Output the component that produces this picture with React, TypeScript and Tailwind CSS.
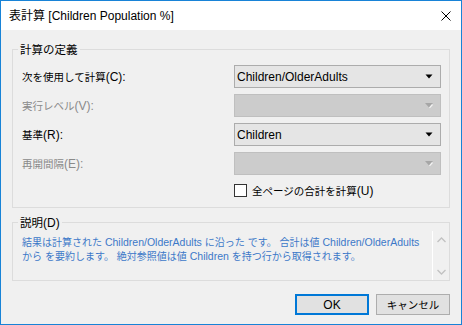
import React from 'react'

const CJK = /([\u3000-\u30ff\u3400-\u9fff\uff00-\uffef]+)/

// Mixed Latin / Japanese text: Japanese runs get the CJK family and their own size
function Txt({ s, j = 'text-[10.5px]' }: { s: string; j?: string }) {
  const parts = s.split(CJK)
  return (
    <>
      {parts.map((p, i) =>
        i % 2 ? (
          <span key={i} className={`font-['Noto_Sans_CJK_JP',sans-serif] ${j}`}>
            {p}
          </span>
        ) : (
          <React.Fragment key={i}>{p}</React.Fragment>
        )
      )}
    </>
  )
}

function Arrow({ disabled }: { disabled?: boolean }) {
  return disabled ? (
    <svg width="9" height="6" viewBox="0 0 9 6" className="mr-[6px]">
      <path d="M0 0h8L4 4.5z" fill="#a6a6a6" />
      <path d="M7.5 1.5L4.5 4.8" stroke="#f4f4f4" strokeWidth="1.2" />
    </svg>
  ) : (
    <svg width="9" height="6" viewBox="0 0 9 6" className="mr-[6px]">
      <path d="M0.5 0.5h7L4 4.5z" fill="#000" />
    </svg>
  )
}

function Select({ value, disabled }: { value?: string; disabled?: boolean }) {
  return (
    <div
      className={
        disabled
          ? 'w-[207px] h-[23px] border border-[#bfbfbf] bg-[#cccccc] flex items-center justify-end'
          : 'w-[207px] h-[23px] border border-[#acacac] bg-[#e5e5e5] flex items-center justify-between pl-[2px] text-[12px] text-black'
      }
    >
      {value ? <span>{value}</span> : null}
      <Arrow disabled={disabled} />
    </div>
  )
}

function Row({ label, value, disabled }: { label: string; value?: string; disabled?: boolean }) {
  return (
    <div className="flex items-center">
      <div className={disabled ? 'w-[216px] pl-[4px] text-[12px] text-[#8a8a8a]' : 'w-[216px] pl-[4px] text-[12px] text-black'}>
        <Txt s={label} />
      </div>
      <Select value={value} disabled={disabled} />
    </div>
  )
}

export default function App() {
  return (
    <div className="w-[462px] h-[325px] border border-[#1883d7] bg-[#f0f0f0] flex flex-col font-['Liberation_Sans','Noto_Sans_CJK_JP',sans-serif] text-black select-none">
      {/* title bar */}
      <div className="h-[29px] bg-white flex items-center justify-between pl-[8px] pr-[10px] text-[12px]">
        <span>
          <Txt s="表計算 [Children Population %]" j="text-[12px]" />
        </span>
        <svg width="10" height="10" viewBox="0 0 10 10">
          <path d="M0.5 0.5l9 9M9.5 0.5l-9 9" stroke="#000" strokeWidth="1" />
        </svg>
      </div>

      <div className="flex-1 flex flex-col px-[11px]">
        <fieldset className="mt-[11px] border border-[#dcdcdc] pl-[5px] pt-[7px] pb-[9px]">
          <legend className="px-[2px] leading-[16px] text-[12px]">
            <Txt s="計算の定義" j="text-[11.5px]" />
          </legend>
          <div className="flex flex-col gap-[6px]">
            <Row label="次を使用して計算(C):" value="Children/OlderAdults" />
            <Row label="実行レベル(V):" disabled />
            <Row label="基準(R):" value="Children" />
            <Row label="再開間隔(E):" disabled />
          </div>
          <div className="mt-[8px] ml-[216px] h-[15px] flex items-center gap-[5px] text-[12px]">
            <div className="w-[13px] h-[13px] border border-[#333333] bg-white" />
            <span>
              <Txt s="全ページの合計を計算(U)" />
            </span>
          </div>
        </fieldset>

        <fieldset className="mt-[6px] border border-[#dcdcdc] pl-[5px]">
          <legend className="px-[2px] leading-[16px] text-[12px]">
            <Txt s="説明(D)" j="text-[11.5px]" />
          </legend>
          <div className="h-[49px] flex">
            <div className="flex-1 pl-[4px] pt-[4px] text-[10.5px] leading-[13px] text-[#3c78c8] whitespace-nowrap overflow-hidden">
              <div>
                <Txt s="結果は計算された Children/OlderAdults に沿った です。 合計は値 Children/OlderAdults" j="text-[10px]" />
              </div>
              <div>
                <Txt s="から を要約します。 絶対参照値は値 Children を持つ行から取得されます。" j="text-[10px]" />
              </div>
            </div>
            <div className="w-[17px] border-l border-white flex flex-col justify-between">
              <div className="h-[17px] flex items-center justify-center">
                <svg width="9" height="6" viewBox="0 0 9 6">
                  <path d="M0.5 5L4.5 1l4 4" stroke="#c2c2c2" strokeWidth="1.3" fill="none" />
                </svg>
              </div>
              <div className="h-[17px] flex items-center justify-center">
                <svg width="9" height="6" viewBox="0 0 9 6">
                  <path d="M0.5 1L4.5 5l4-4" stroke="#c2c2c2" strokeWidth="1.3" fill="none" />
                </svg>
              </div>
            </div>
          </div>
        </fieldset>

        <div className="mt-[13px] flex justify-end gap-[7px]">
          <button className="w-[74px] h-[21px] border-2 border-[#0078d7] bg-[#e1e1e1] text-[12px] flex items-center justify-center">
            OK
          </button>
          <button className="w-[74px] h-[21px] border border-[#adadad] bg-[#e1e1e1] text-[12px] flex items-center justify-center">
            <Txt s="キャンセル" />
          </button>
        </div>
      </div>
    </div>
  )
}
